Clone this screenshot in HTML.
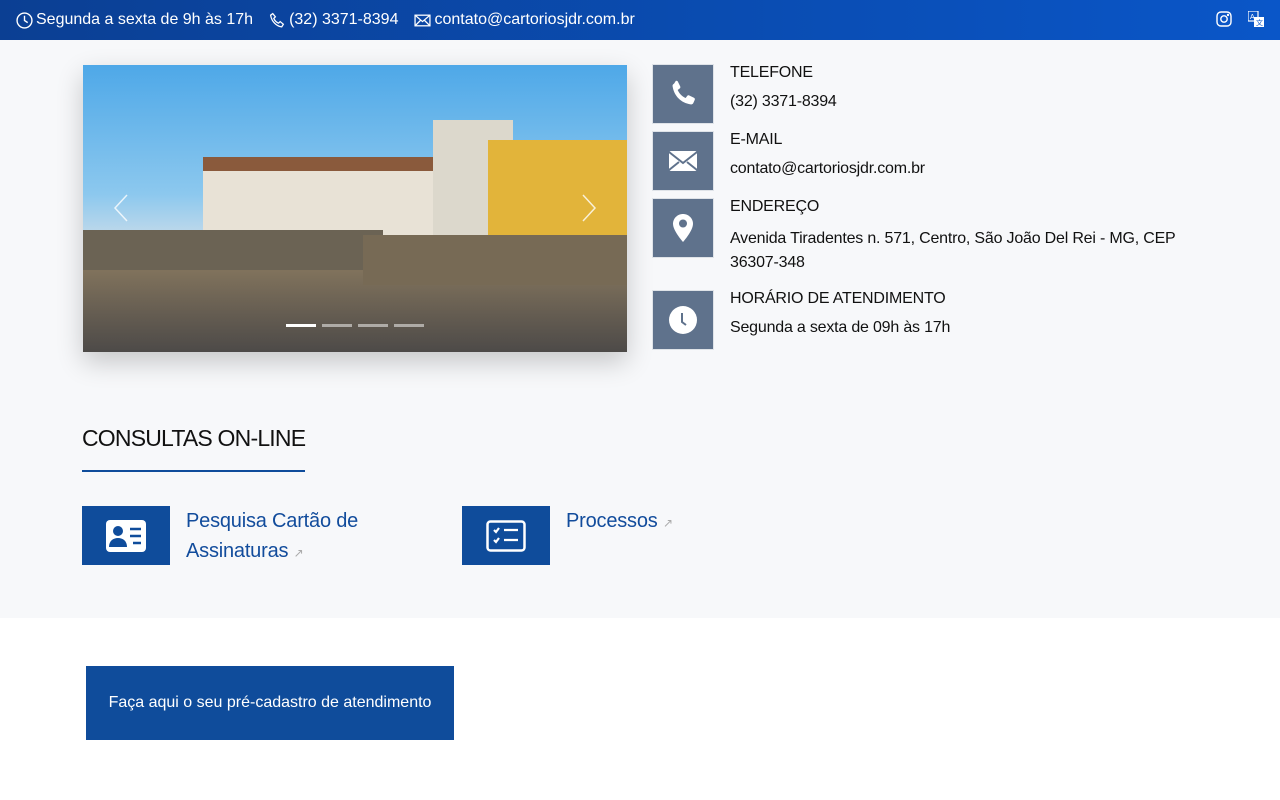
<!DOCTYPE html>
<html><head><meta charset="utf-8"><style>
*{box-sizing:border-box;margin:0;padding:0}
body{width:1280px;height:800px;overflow:hidden;font-family:"Liberation Sans",sans-serif;background:#fff;color:#111}
.top{height:40px;background:linear-gradient(90deg,#0b3f93,#0a56c8);color:#fff;font-size:16px;display:flex;align-items:center;padding-left:16px;position:relative}
.top span{display:inline-flex;align-items:center;margin-right:16px;letter-spacing:0}
.top svg{margin-right:3px}
.gray{background:#f7f8fa;height:578px;position:relative}
.car{position:absolute;left:83px;top:25px;width:544px;height:287px;box-shadow:0 10px 25px rgba(0,0,0,.2);overflow:hidden;background:linear-gradient(180deg,#4ea8e8 0%,#8cc8ee 45%,#c9dcea 62%,#7d6a4c 72%,#5a5046 100%)}
.info{position:absolute;left:652px}
.ib{position:absolute;width:62px;height:60px;background:#5f728c;border:1px solid #dfe3e8;display:flex;align-items:center;justify-content:center}
.it{position:absolute;left:78px;font-size:16px;color:#111;white-space:nowrap;letter-spacing:-0.2px}
h2{position:absolute;left:82px;top:385px;font-size:23px;font-weight:400;letter-spacing:-0.8px}
.ul{position:absolute;left:82px;top:430px;width:223px;height:2px;background:#0f4c9b}
.cb{position:absolute;top:466px;width:88px;height:59px;background:#0f4c9b;display:flex;align-items:center;justify-content:center}
.cl{position:absolute;top:466px;font-size:20px;color:#124c9c;line-height:30px;letter-spacing:-0.2px}
.btn{position:absolute;left:86px;top:666px;width:368px;height:74px;background:#0f4c9b;color:#fff;font-size:16px;display:flex;align-items:center;justify-content:center}
</style></head><body>
<div class="top">
<span><svg width="17" height="17" viewBox="0 0 16 16" fill="none" stroke="#fff" stroke-width="1.3"><circle cx="8" cy="8" r="7"/><path d="M8 3.5V8l3 2"/></svg>Segunda a sexta de 9h às 17h</span>
<span><svg width="17" height="17" viewBox="0 0 16 16" fill="none" stroke="#fff" stroke-width="1.2"><path d="M3.5 1.5l2.5 3-1.5 1.5c.8 2 2.5 3.7 4.5 4.5l1.5-1.5 3 2.5-1.5 2.5C7 13.5 2.5 9 1.5 3z"/></svg>(32) 3371-8394</span>
<span><svg width="17" height="17" viewBox="0 0 16 16" fill="none" stroke="#fff" stroke-width="1.2"><rect x="1" y="3" width="14" height="10"/><path d="M1 3l7 6 7-6M1 13l5-5M15 13l-5-5"/></svg>contato@cartoriosjdr.com.br</span>
<svg style="position:absolute;left:1216px;top:11px" width="16" height="16" viewBox="0 0 16 16" fill="none" stroke="#fff" stroke-width="1.4"><rect x="1" y="1" width="14" height="14" rx="4"/><circle cx="8" cy="8" r="3.2"/><circle cx="12" cy="4" r=".5" fill="#fff"/></svg>
<svg style="position:absolute;left:1248px;top:11px" width="16" height="16" viewBox="0 0 16 16"><rect x="0" y="0" width="10" height="10" fill="none" stroke="#fff" stroke-width="1.2"/><rect x="6" y="6" width="10" height="10" fill="#fff"/><text x="2" y="8" font-size="7" fill="#fff" font-family="Liberation Sans">A</text><text x="8" y="14" font-size="7" fill="#0a56c8" font-family="Noto Sans CJK JP,sans-serif">文</text></svg>
</div>
<div class="gray">
<div class="car">
<div style="position:absolute;left:0;top:190px;width:544px;height:97px;background:linear-gradient(180deg,#8a7a60,#4d4a48)"></div>
<div style="position:absolute;left:120px;top:100px;width:240px;height:80px;background:#e8e2d6"></div>
<div style="position:absolute;left:120px;top:92px;width:240px;height:14px;background:#8a5a3c"></div>
<div style="position:absolute;left:350px;top:55px;width:80px;height:130px;background:#dcd8cc"></div>
<div style="position:absolute;left:405px;top:75px;width:139px;height:115px;background:#e2b43a"></div>
<div style="position:absolute;left:0;top:165px;width:300px;height:40px;background:#6b6354"></div>
<div style="position:absolute;left:280px;top:170px;width:264px;height:50px;background:#776a55"></div>
<svg style="position:absolute;left:30px;top:128px" width="16" height="30" viewBox="0 0 16 30" fill="none" stroke="#fff" stroke-width="1.5" opacity=".8"><path d="M14 2L2 15l12 13"/></svg>
<svg style="position:absolute;left:498px;top:128px" width="16" height="30" viewBox="0 0 16 30" fill="none" stroke="#fff" stroke-width="1.5" opacity=".8"><path d="M2 2l12 13L2 28"/></svg>
<div style="position:absolute;left:203px;top:259px;width:30px;height:3px;background:#fff"></div>
<div style="position:absolute;left:239px;top:259px;width:30px;height:3px;background:rgba(255,255,255,.5)"></div>
<div style="position:absolute;left:275px;top:259px;width:30px;height:3px;background:rgba(255,255,255,.5)"></div>
<div style="position:absolute;left:311px;top:259px;width:30px;height:3px;background:rgba(255,255,255,.5)"></div>
</div>
<div class="info">
<div class="ib" style="top:24px"><svg width="32" height="32" viewBox="0 0 24 24" fill="#fff"><path d="M6.6 2.2c.6-.3 1.3 0 1.6.6l1.7 3.5c.3.6.1 1.2-.4 1.6L8 9c1.2 2.7 3.3 4.8 6 6l1.1-1.5c.4-.5 1-.7 1.6-.4l3.5 1.7c.6.3.9 1 .6 1.6l-1 2.3c-.3.8-1.2 1.3-2.1 1.1C10.4 18.6 5.4 13.6 4.2 6.3 4 5.4 4.5 4.5 5.3 4.2z"/></svg></div>
<div class="it" style="top:24px">TELEFONE</div><div class="it" style="top:53px">(32) 3371-8394</div>
<div class="ib" style="top:91px"><svg width="30" height="24" viewBox="0 0 30 24"><rect x="1" y="2" width="28" height="20" rx="2" fill="#fff"/><path d="M1 3l14 11L29 3M1 21l10-8M29 21l-10-8" stroke="#5f728c" stroke-width="2" fill="none"/></svg></div>
<div class="it" style="top:91px">E-MAIL</div><div class="it" style="top:120px">contato@cartoriosjdr.com.br</div>
<div class="ib" style="top:158px"><svg width="22" height="30" viewBox="0 0 22 30"><path d="M11 1C5.5 1 1 5.3 1 10.8 1 18 11 29 11 29s10-11 10-18.2C21 5.3 16.5 1 11 1z" fill="#fff"/><circle cx="11" cy="10.5" r="4" fill="#5f728c"/></svg></div>
<div class="it" style="top:158px">ENDEREÇO</div><div class="it" style="top:187px;line-height:24px">Avenida Tiradentes n. 571, Centro, São João Del Rei - MG, CEP<br>36307-348</div>
<div class="ib" style="top:250px"><svg width="30" height="30" viewBox="0 0 30 30"><circle cx="15" cy="15" r="14" fill="#fff"/><path d="M14 8v9l4 3" stroke="#5f728c" stroke-width="2" fill="none"/></svg></div>
<div class="it" style="top:250px">HORÁRIO DE ATENDIMENTO</div><div class="it" style="top:279px">Segunda a sexta de 09h às 17h</div>
</div>
<h2>CONSULTAS ON-LINE</h2><div class="ul"></div>
<div class="cb" style="left:82px"><svg width="40" height="32" viewBox="0 0 40 32"><rect x="0" y="0" width="40" height="32" rx="4" fill="#fff"/><circle cx="12" cy="11" r="5" fill="#0f4c9b"/><path d="M3 27c0-6 4-9 9-9s9 3 9 9z" fill="#0f4c9b"/><path d="M24 9h11M24 16h11M27 23h8" stroke="#0f4c9b" stroke-width="2.5"/></svg></div>
<div class="cl" style="left:186px">Pesquisa Cartão de<br>Assinaturas <span style="font-size:12px;color:#aaa">↗</span></div>
<div class="cb" style="left:462px"><svg width="40" height="32" viewBox="0 0 40 32" fill="none" stroke="#fff" stroke-width="2.5"><rect x="1.5" y="1.5" width="37" height="29" rx="3"/><path d="M8 10l2 2 3-4M8 20l2 2 3-4M18 10h14M18 20h14" stroke-width="2.2"/></svg></div>
<div class="cl" style="left:566px">Processos <span style="font-size:12px;color:#aaa">↗</span></div>
</div>
<div class="btn">Faça aqui o seu pré-cadastro de atendimento</div>
</body></html>
